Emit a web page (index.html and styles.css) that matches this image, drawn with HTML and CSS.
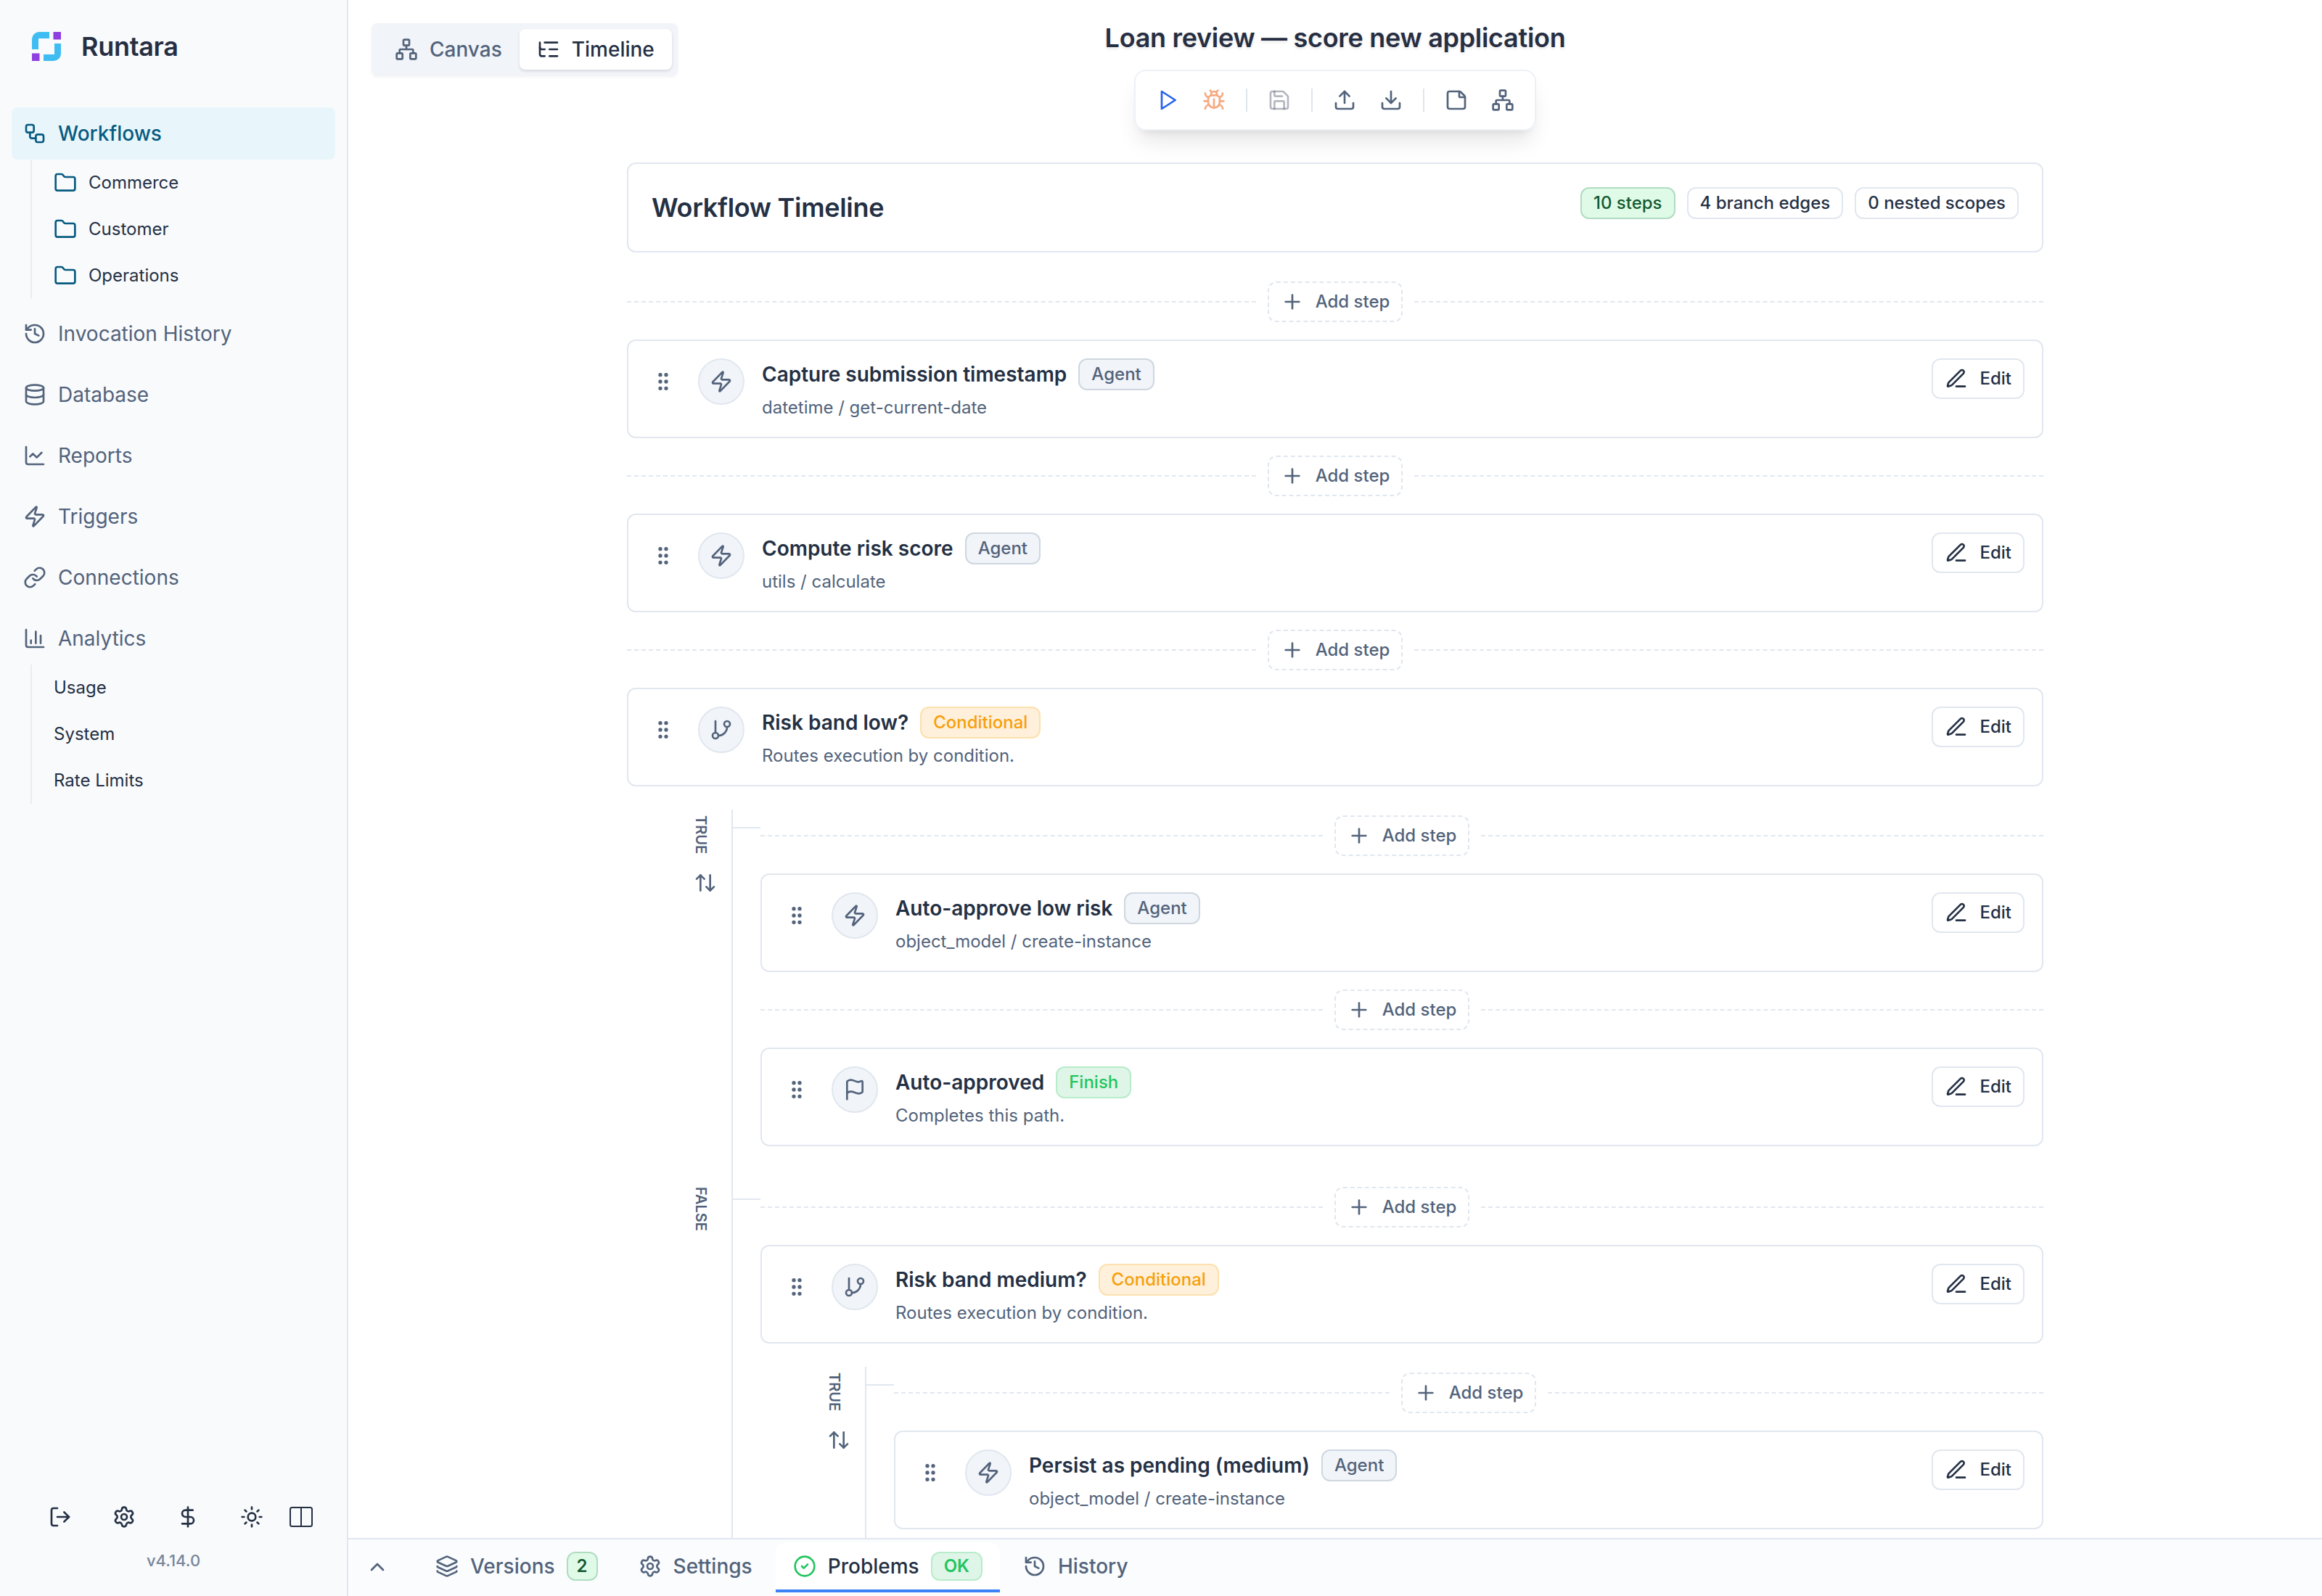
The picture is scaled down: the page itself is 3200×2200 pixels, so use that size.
FILE: index.html
```html
<!DOCTYPE html>
<html lang="en">
<head>
<meta charset="utf-8">
<title>Runtara</title>
<link rel="stylesheet" href="styles.css">
</head>
<body>
<svg class="sprite" aria-hidden="true">
  <symbol id="workflow" viewBox="0 0 24 24"><rect width="8" height="8" x="3" y="3" rx="2"/><path d="M7 11v4a2 2 0 0 0 2 2h4"/><rect width="8" height="8" x="13" y="13" rx="2"/></symbol>
  <symbol id="folder" viewBox="0 0 24 24"><path d="M20 20a2 2 0 0 0 2-2V8a2 2 0 0 0-2-2h-7.9a2 2 0 0 1-1.69-.9L9.6 3.9A2 2 0 0 0 7.93 3H4a2 2 0 0 0-2 2v13a2 2 0 0 0 2 2Z"/></symbol>
  <symbol id="history" viewBox="0 0 24 24"><path d="M3 12a9 9 0 1 0 9-9 9.75 9.75 0 0 0-6.74 2.74L3 8"/><path d="M3 3v5h5"/><path d="M12 7v5l4 2"/></symbol>
  <symbol id="database" viewBox="0 0 24 24"><ellipse cx="12" cy="5" rx="9" ry="3"/><path d="M3 5V19A9 3 0 0 0 21 19V5"/><path d="M3 12A9 3 0 0 0 21 12"/></symbol>
  <symbol id="chart-line" viewBox="0 0 24 24"><path d="M3 3v16a2 2 0 0 0 2 2h16"/><path d="m19 9-5 5-4-4-3 3"/></symbol>
  <symbol id="zap" viewBox="0 0 24 24"><path d="M4 14a1 1 0 0 1-.78-1.63l9.9-10.2a.5.5 0 0 1 .86.46l-1.92 6.02A1 1 0 0 0 13 10h7a1 1 0 0 1 .78 1.63l-9.9 10.2a.5.5 0 0 1-.86-.46l1.92-6.02A1 1 0 0 0 11 14z"/></symbol>
  <symbol id="link" viewBox="0 0 24 24"><path d="M10 13a5 5 0 0 0 7.54.54l3-3a5 5 0 0 0-7.07-7.07l-1.72 1.71"/><path d="M14 11a5 5 0 0 0-7.54-.54l-3 3a5 5 0 0 0 7.07 7.07l1.71-1.71"/></symbol>
  <symbol id="chart-column" viewBox="0 0 24 24"><path d="M3 3v16a2 2 0 0 0 2 2h16"/><path d="M18 17V9"/><path d="M13 17V5"/><path d="M8 17v-3"/></symbol>
  <symbol id="log-out" viewBox="0 0 24 24"><path d="m16 17 5-5-5-5"/><path d="M21 12H9"/><path d="M9 21H5a2 2 0 0 1-2-2V5a2 2 0 0 1 2-2h4"/></symbol>
  <symbol id="settings" viewBox="0 0 24 24"><path d="M9.671 4.136a2.34 2.34 0 0 1 4.659 0 2.34 2.34 0 0 0 3.319 1.915 2.34 2.34 0 0 1 2.33 4.033 2.34 2.34 0 0 0 0 3.831 2.34 2.34 0 0 1-2.33 4.033 2.34 2.34 0 0 0-3.319 1.915 2.34 2.34 0 0 1-4.659 0 2.34 2.34 0 0 0-3.32-1.915 2.34 2.34 0 0 1-2.33-4.033 2.34 2.34 0 0 0 0-3.831A2.34 2.34 0 0 1 6.35 6.051a2.34 2.34 0 0 0 3.319-1.915"/><circle cx="12" cy="12" r="3"/></symbol>
  <symbol id="dollar" viewBox="0 0 24 24"><path d="M12 2v20"/><path d="M17 5H9.500a3.500 3.500 0 0 0 0 7h5a3.500 3.500 0 0 1 0 7H6"/></symbol>
  <symbol id="sun" viewBox="0 0 24 24"><circle cx="12" cy="12" r="4"/><path d="M12 2v2"/><path d="M12 20v2"/><path d="m4.930 4.930 1.410 1.410"/><path d="m17.660 17.660 1.410 1.410"/><path d="M2 12h2"/><path d="M20 12h2"/><path d="m6.340 17.660-1.410 1.410"/><path d="m19.070 4.930-1.410 1.410"/></symbol>
  <symbol id="network" viewBox="0 0 24 24"><rect x="16" y="16" width="6" height="6" rx="1"/><rect x="2" y="16" width="6" height="6" rx="1"/><rect x="9" y="2" width="6" height="6" rx="1"/><path d="M5 16v-3a1 1 0 0 1 1-1h12a1 1 0 0 1 1 1v3"/><path d="M12 12V8"/></symbol>
  <symbol id="list-tree" viewBox="0 0 24 24"><path d="M8 5h13"/><path d="M13 12h8"/><path d="M13 19h8"/><path d="M3 10a2 2 0 0 0 2 2h3"/><path d="M3 5v12a2 2 0 0 0 2 2h3"/></symbol>
  <symbol id="play" viewBox="0 0 24 24"><path d="M6 3 20 12 6 21Z"/></symbol>
  <symbol id="bug" viewBox="0 0 24 24"><path d="m8 2 1.880 1.880"/><path d="M14.120 3.880 16 2"/><path d="M9 7.130v-1a3.003 3.003 0 1 1 6 0v1"/><path d="M12 20c-3.300 0-6-2.700-6-6v-3a4 4 0 0 1 4-4h4a4 4 0 0 1 4 4v3c0 3.300-2.700 6-6 6"/><path d="M12 20v-9"/><path d="M6.530 9C4.600 8.800 3 7.100 3 5"/><path d="M6 13H2"/><path d="M3 21c0-2.100 1.700-3.900 3.800-4"/><path d="M20.970 5c0 2.100-1.600 3.800-3.500 4"/><path d="M22 13h-4"/><path d="M17.200 17c2.100.1 3.800 1.900 3.800 4"/></symbol>
  <symbol id="save" viewBox="0 0 24 24"><path d="M15.200 3a2 2 0 0 1 1.400.6l3.800 3.800a2 2 0 0 1 .6 1.400V19a2 2 0 0 1-2 2H5a2 2 0 0 1-2-2V5a2 2 0 0 1 2-2z"/><path d="M17 21v-7a1 1 0 0 0-1-1H8a1 1 0 0 0-1 1v7"/><path d="M7 3v4a1 1 0 0 0 1 1h7"/></symbol>
  <symbol id="upload" viewBox="0 0 24 24"><path d="M12 3v12"/><path d="m17 8-5-5-5 5"/><path d="M21 15v4a2 2 0 0 1-2 2H5a2 2 0 0 1-2-2v-4"/></symbol>
  <symbol id="download" viewBox="0 0 24 24"><path d="M12 15V3"/><path d="M21 15v4a2 2 0 0 1-2 2H5a2 2 0 0 1-2-2v-4"/><path d="m7 10 5 5 5-5"/></symbol>
  <symbol id="note" viewBox="0 0 24 24"><path d="M21 9a2.400 2.400 0 0 0-.706-1.706l-3.588-3.588A2.400 2.400 0 0 0 15 3H5a2 2 0 0 0-2 2v14a2 2 0 0 0 2 2h14a2 2 0 0 0 2-2z"/><path d="M15 3v5a1 1 0 0 0 1 1h5"/></symbol>
  <symbol id="plus" viewBox="0 0 24 24"><path d="M5 12h14"/><path d="M12 5v14"/></symbol>
  <symbol id="pen" viewBox="0 0 24 24"><path d="M12 20h9"/><path d="M16.376 3.622a1 1 0 0 1 3.002 3.002L7.368 18.635a2 2 0 0 1-.855.506l-2.872.838a.5.5 0 0 1-.62-.62l.838-2.872a2 2 0 0 1 .506-.854z"/></symbol>
  <symbol id="grip" viewBox="0 0 24 24"><circle cx="9" cy="12" r="1"/><circle cx="9" cy="5" r="1"/><circle cx="9" cy="19" r="1"/><circle cx="15" cy="12" r="1"/><circle cx="15" cy="5" r="1"/><circle cx="15" cy="19" r="1"/></symbol>
  <symbol id="branch" viewBox="0 0 24 24"><path d="M6 3v12"/><circle cx="18" cy="6" r="3"/><circle cx="6" cy="18" r="3"/><path d="M18 9a9 9 0 0 1-9 9"/></symbol>
  <symbol id="flag" viewBox="0 0 24 24"><path d="M4 22V4a1 1 0 0 1 .4-.8A6 6 0 0 1 8 2c3 0 5 2 7.333 2q2 0 3.067-.8A1 1 0 0 1 20 4v10a1 1 0 0 1-.4.8A6 6 0 0 1 16 16c-3 0-5-2-8-2a6 6 0 0 0-4 1.528"/></symbol>
  <symbol id="swap" viewBox="0 0 24 24"><path d="m21 16-4 4-4-4"/><path d="M17 20V4"/><path d="m3 8 4-4 4 4"/><path d="M7 4v16"/></symbol>
  <symbol id="chevron-up" viewBox="0 0 24 24"><path d="m18 15-6-6-6 6"/></symbol>
  <symbol id="layers" viewBox="0 0 24 24"><path d="M12.830 2.180a2 2 0 0 0-1.660 0L2.600 6.080a1 1 0 0 0 0 1.830l8.580 3.910a2 2 0 0 0 1.660 0l8.580-3.900a1 1 0 0 0 0-1.830z"/><path d="M2 12a1 1 0 0 0 .58.91l8.600 3.910a2 2 0 0 0 1.650 0l8.580-3.900A1 1 0 0 0 22 12"/><path d="M2 17a1 1 0 0 0 .58.91l8.600 3.910a2 2 0 0 0 1.650 0l8.580-3.900A1 1 0 0 0 22 17"/></symbol>
  <symbol id="check" viewBox="0 0 24 24"><circle cx="12" cy="12" r="10"/><path d="m9 12 2 2 4-4"/></symbol>
</svg>

<div class="app">
  <aside class="sidebar">
    <div class="brand">
      <svg class="logo" viewBox="0 0 40 40"><path class="logo-blue" d="M10 0H24V9H9V24H0V10A10 10 0 0 1 10 0ZM40 16V30A10 10 0 0 1 30 40H16V31H31V16Z"/><path class="logo-purple" d="M29.500 0H40V10.500H29.500ZM0 29.500H10.500V40H0Z"/></svg>
      <span>Runtara</span>
    </div>
    <nav class="nav">
      <div class="group">
        <a class="item active"><svg class="icon"><use href="#workflow"/></svg>Workflows</a>
        <div class="sub">
          <a class="subitem"><svg class="icon folder"><use href="#folder"/></svg>Commerce</a>
          <a class="subitem"><svg class="icon folder"><use href="#folder"/></svg>Customer</a>
          <a class="subitem"><svg class="icon folder"><use href="#folder"/></svg>Operations</a>
        </div>
      </div>
      <a class="item"><svg class="icon"><use href="#history"/></svg>Invocation History</a>
      <a class="item"><svg class="icon"><use href="#database"/></svg>Database</a>
      <a class="item"><svg class="icon"><use href="#chart-line"/></svg>Reports</a>
      <a class="item"><svg class="icon"><use href="#zap"/></svg>Triggers</a>
      <a class="item"><svg class="icon"><use href="#link"/></svg>Connections</a>
      <div class="group">
        <a class="item"><svg class="icon"><use href="#chart-column"/></svg>Analytics</a>
        <div class="sub">
          <a class="subitem">Usage</a>
          <a class="subitem">System</a>
          <a class="subitem">Rate Limits</a>
        </div>
      </div>
    </nav>
    <div class="side-foot">
      <div class="side-icons">
        <span class="side-btn"><svg class="icon"><use href="#log-out"/></svg></span>
        <span class="side-btn"><svg class="icon"><use href="#settings"/></svg></span>
        <span class="side-btn"><svg class="icon"><use href="#dollar"/></svg></span>
        <span class="side-btn"><svg class="icon"><use href="#sun"/></svg></span>
        <svg class="panel" viewBox="0 0 32 28"><rect x="1" y="1" width="30" height="26" rx="2.500"/><path d="M16 1v26"/></svg>
      </div>
      <div class="version">v4.14.0</div>
    </div>
  </aside>

  <main class="main">
    <header class="top">
      <div class="views">
        <span class="view"><svg class="icon"><use href="#network"/></svg>Canvas</span>
        <span class="view on"><svg class="icon"><use href="#list-tree"/></svg>Timeline</span>
      </div>
      <div class="heading">
        <h1>Loan review — score new application</h1>
        <div class="toolbar">
          <span class="tool run"><svg class="icon"><use href="#play"/></svg></span>
          <span class="tool debug"><svg class="icon"><use href="#bug"/></svg></span>
          <i class="sep"></i>
          <span class="tool off"><svg class="icon"><use href="#save"/></svg></span>
          <i class="sep"></i>
          <span class="tool"><svg class="icon"><use href="#upload"/></svg></span>
          <span class="tool"><svg class="icon"><use href="#download"/></svg></span>
          <i class="sep"></i>
          <span class="tool"><svg class="icon"><use href="#note"/></svg></span>
          <span class="tool"><svg class="icon"><use href="#network"/></svg></span>
        </div>
      </div>
    </header>

    <div class="scroll">
      <section class="timeline">
        <div class="card summary">
          <h2>Workflow Timeline</h2>
          <div class="badges">
            <span class="badge steps">10 steps</span>
            <span class="badge">4 branch edges</span>
            <span class="badge">0 nested scopes</span>
          </div>
        </div>

        <div class="flow">
          <div class="add"><span class="add-btn"><svg class="icon"><use href="#plus"/></svg>Add step</span></div>
          <div class="card step">
            <span class="grip"><svg class="icon"><use href="#grip"/></svg></span>
            <span class="kind"><svg class="icon"><use href="#zap"/></svg></span>
            <div class="info"><div class="name">Capture submission timestamp<span class="badge agent">Agent</span></div><div class="desc">datetime / get-current-date</div></div>
            <span class="edit"><svg class="icon"><use href="#pen"/></svg>Edit</span>
          </div>
          <div class="add"><span class="add-btn"><svg class="icon"><use href="#plus"/></svg>Add step</span></div>
          <div class="card step">
            <span class="grip"><svg class="icon"><use href="#grip"/></svg></span>
            <span class="kind"><svg class="icon"><use href="#zap"/></svg></span>
            <div class="info"><div class="name">Compute risk score<span class="badge agent">Agent</span></div><div class="desc">utils / calculate</div></div>
            <span class="edit"><svg class="icon"><use href="#pen"/></svg>Edit</span>
          </div>
          <div class="add"><span class="add-btn"><svg class="icon"><use href="#plus"/></svg>Add step</span></div>
          <div class="card step">
            <span class="grip"><svg class="icon"><use href="#grip"/></svg></span>
            <span class="kind"><svg class="icon"><use href="#branch"/></svg></span>
            <div class="info"><div class="name">Risk band low?<span class="badge conditional">Conditional</span></div><div class="desc">Routes execution by condition.</div></div>
            <span class="edit"><svg class="icon"><use href="#pen"/></svg>Edit</span>
          </div>
        </div>

        <div class="branches">
          <div class="branch">
            <div class="rail"><span class="label">TRUE</span><svg class="icon"><use href="#swap"/></svg></div>
            <div class="tick"></div>
            <div class="flow">
              <div class="add"><span class="add-btn"><svg class="icon"><use href="#plus"/></svg>Add step</span></div>
              <div class="card step">
                <span class="grip"><svg class="icon"><use href="#grip"/></svg></span>
                <span class="kind"><svg class="icon"><use href="#zap"/></svg></span>
                <div class="info"><div class="name">Auto-approve low risk<span class="badge agent">Agent</span></div><div class="desc">object_model / create-instance</div></div>
                <span class="edit"><svg class="icon"><use href="#pen"/></svg>Edit</span>
              </div>
              <div class="add"><span class="add-btn"><svg class="icon"><use href="#plus"/></svg>Add step</span></div>
              <div class="card step">
                <span class="grip"><svg class="icon"><use href="#grip"/></svg></span>
                <span class="kind"><svg class="icon"><use href="#flag"/></svg></span>
                <div class="info"><div class="name">Auto-approved<span class="badge ok">Finish</span></div><div class="desc">Completes this path.</div></div>
                <span class="edit"><svg class="icon"><use href="#pen"/></svg>Edit</span>
              </div>
            </div>
          </div>
          <div class="branch">
            <div class="rail"><span class="label">FALSE</span></div>
            <div class="tick"></div>
            <div class="nested">
              <div class="flow">
                <div class="add"><span class="add-btn"><svg class="icon"><use href="#plus"/></svg>Add step</span></div>
                <div class="card step">
                  <span class="grip"><svg class="icon"><use href="#grip"/></svg></span>
                  <span class="kind"><svg class="icon"><use href="#branch"/></svg></span>
                  <div class="info"><div class="name">Risk band medium?<span class="badge conditional">Conditional</span></div><div class="desc">Routes execution by condition.</div></div>
                  <span class="edit"><svg class="icon"><use href="#pen"/></svg>Edit</span>
                </div>
              </div>
              <div class="branches">
                <div class="branch">
                  <div class="rail"><span class="label">TRUE</span><svg class="icon"><use href="#swap"/></svg></div>
                  <div class="tick"></div>
                  <div class="flow">
                    <div class="add"><span class="add-btn"><svg class="icon"><use href="#plus"/></svg>Add step</span></div>
                    <div class="card step">
                      <span class="grip"><svg class="icon"><use href="#grip"/></svg></span>
                      <span class="kind"><svg class="icon"><use href="#zap"/></svg></span>
                      <div class="info"><div class="name">Persist as pending (medium)<span class="badge agent">Agent</span></div><div class="desc">object_model / create-instance</div></div>
                      <span class="edit"><svg class="icon"><use href="#pen"/></svg>Edit</span>
                    </div>
                  </div>
                </div>
              </div>
            </div>
          </div>
        </div>
      </section>
    </div>

    <footer class="dock">
      <span class="collapse"><svg class="icon"><use href="#chevron-up"/></svg></span>
      <span class="tab"><svg class="icon"><use href="#layers"/></svg>Versions<span class="badge steps count">2</span></span>
      <span class="tab"><svg class="icon"><use href="#settings"/></svg>Settings</span>
      <span class="tab current"><svg class="icon"><use href="#check"/></svg>Problems<span class="badge ok">OK</span></span>
      <span class="tab"><svg class="icon"><use href="#history"/></svg>History</span>
    </footer>
  </main>
</div>
</body>
</html>
```
FILE: styles.css
```css
:root {
  --ink: #243044;
  --muted: #52637b;
  --line: #e1e7ef;
  --accent: #075b80;
}

* { box-sizing: border-box; }

body {
  margin: 0;
  font-family: Inter, sans-serif;
  font-size: 28px;
  color: var(--ink);
  background: #fff;
  overflow: hidden;
}

.sprite { display: none; }

.icon {
  width: 32px;
  height: 32px;
  flex: none;
  fill: none;
  stroke: currentColor;
  stroke-width: 2;
  stroke-linecap: round;
  stroke-linejoin: round;
}

.app { display: flex; width: 3200px; height: 2200px; }

/* Sidebar */
.sidebar {
  width: 480px;
  flex: none;
  display: flex;
  flex-direction: column;
  background: #f9fafc;
  border-right: 2px solid var(--line);
}

.brand {
  display: flex;
  align-items: center;
  gap: 28px;
  height: 128px;
  padding-left: 44px;
  font-size: 36px;
  font-weight: 600;
  letter-spacing: -.3px;
  color: #272e42;
}

.logo { width: 40px; height: 40px; }
.logo-blue { fill: #3fbdf2; }
.logo-purple { fill: #8e3fe0; }

.nav {
  display: flex;
  flex-direction: column;
  gap: 12px;
  padding: 20px 16px;
}

.item {
  display: flex;
  align-items: center;
  gap: 16px;
  height: 72px;
  padding: 0 16px;
  border-radius: 8px;
  color: var(--muted);
}

.item.active {
  background: #e8f6fc;
  color: var(--accent);
  font-weight: 500;
}

.sub {
  margin-left: 26px;
  border-left: 2px solid #e9edf2;
}

.subitem {
  display: flex;
  align-items: center;
  gap: 16px;
  height: 64px;
  padding-left: 30px;
  font-size: 24px;
  line-height: 32px;
}

.folder { color: var(--accent); }

.side-foot { margin-top: auto; padding-bottom: 33px; }

.side-icons {
  display: flex;
  align-items: center;
  padding-left: 39px;
}

.side-btn { width: 88px; display: flex; justify-content: center; }

.panel {
  width: 32px;
  height: 28px;
  margin-left: 8px;
  fill: none;
  stroke: currentColor;
  stroke-width: 2;
}

.version {
  margin-top: 28px;
  text-align: center;
  font-size: 22px;
  line-height: 32px;
  font-weight: 500;
  color: #78869b;
}

/* Header */
.main {
  flex: 1;
  min-width: 0;
  display: flex;
  flex-direction: column;
}

.top {
  display: grid;
  grid-template-columns: 1fr auto 1fr;
  align-items: start;
  height: 224px;
  flex: none;
  padding: 24px 32px 0;
}

.views {
  justify-self: start;
  display: flex;
  height: 72px;
  margin-top: 8px;
  padding: 8px;
  border-radius: 8px;
  background: #f1f4f9;
  box-shadow: 0 2px 4px rgba(0, 0, 0, .06);
}

.view {
  display: flex;
  align-items: center;
  gap: 16px;
  padding: 0 24px;
  border-radius: 8px;
  font-weight: 500;
  color: var(--muted);
}

.view.on {
  background: #fff;
  color: var(--ink);
  box-shadow: 0 2px 4px rgba(0, 0, 0, .12);
}

.heading {
  display: flex;
  flex-direction: column;
  align-items: center;
  gap: 16px;
}

h1 {
  margin: 0;
  font-size: 36px;
  line-height: 56px;
  font-weight: 600;
  letter-spacing: -.3px;
  color: #272e42;
  text-shadow: 0 2px 4px rgba(0, 0, 0, .1);
}

.toolbar {
  display: flex;
  align-items: center;
  gap: 8px;
  height: 84px;
  padding: 0 16px;
  border: 2px solid #edf1f6;
  border-radius: 16px;
  box-shadow: 0 20px 30px -6px rgba(0, 0, 0, .1), 0 8px 12px -8px rgba(0, 0, 0, .1);
}

.tool {
  display: flex;
  align-items: center;
  justify-content: center;
  width: 56px;
  height: 56px;
  color: var(--muted);
}

.run { color: #2563eb; }
.debug { color: #f6a981; }
.off { color: rgba(75, 85, 105, .42); }

.sep {
  width: 2px;
  height: 32px;
  margin: 0 8px;
  background: #dfe5ee;
}

/* Timeline */
.scroll { flex: 1; min-height: 0; overflow: hidden; }

.timeline { width: 1952px; margin: 0 auto; }

.card {
  border: 2px solid var(--line);
  border-radius: 12px;
  background: #fff;
}

.summary {
  display: flex;
  justify-content: space-between;
  align-items: flex-start;
  height: 124px;
  margin-bottom: 40px;
  padding: 32px;
}

h2 {
  margin: 0;
  font-size: 36px;
  line-height: 56px;
  font-weight: 600;
  letter-spacing: -.3px;
}

.badges { display: flex; gap: 16px; }

.badge {
  display: inline-flex;
  align-items: center;
  height: 44px;
  padding: 0 16px;
  border: 2px solid var(--line);
  border-radius: 12px;
  font-size: 24px;
  line-height: 32px;
  font-weight: 500;
}

.badge.steps { background: #dffbe8; border-color: #b0dcc0; color: #14592f; }
.badge.agent { background: #f1f4f9; border-color: #ced7e0; color: var(--muted); }
.badge.conditional { background: #fef0da; border-color: #fde0ad; color: #f79f0c; }
.badge.ok { background: #def5e7; border-color: #b8ecca; color: #22c55e; }

.flow { display: flex; flex-direction: column; gap: 24px; }

.add { display: flex; align-items: center; gap: 16px; }

.add::before,
.add::after {
  content: "";
  flex: 1;
  border-top: 2px dashed var(--line);
}

.add-btn,
.edit {
  display: flex;
  align-items: center;
  gap: 16px;
  height: 56px;
  padding: 0 16px;
  border: 2px solid var(--line);
  border-radius: 12px;
  font-size: 24px;
  line-height: 32px;
  font-weight: 500;
}

.add-btn { border-style: dashed; color: var(--muted); }

.step {
  display: flex;
  align-items: flex-start;
  gap: 24px;
  height: 136px;
  padding: 24px;
}

.grip,
.kind {
  display: flex;
  align-items: center;
  justify-content: center;
  width: 48px;
  height: 64px;
  color: var(--muted);
}

.kind {
  width: 64px;
  border: 2px solid var(--line);
  border-radius: 50%;
  background: #f1f4f9;
}

.info { flex: 1; }

.name {
  display: flex;
  align-items: center;
  gap: 16px;
  height: 44px;
  font-weight: 600;
}

.desc {
  margin-top: 8px;
  font-size: 24px;
  line-height: 32px;
  color: var(--muted);
}

.branches { margin-top: 32px; }

.branch {
  display: grid;
  grid-template-columns: 144px 40px 1fr;
  padding-bottom: 48px;
}

.branch > :last-child { padding-top: 8px; }

.rail {
  display: flex;
  flex-direction: column;
  align-items: flex-start;
  gap: 24px;
  padding: 8px 0 0 92px;
  color: var(--muted);
}

.label {
  writing-mode: vertical-rl;
  font-size: 20px;
  line-height: 20px;
  font-weight: 600;
}

.tick {
  border-left: 2px solid var(--line);
  margin-bottom: -48px;
}

.tick::before {
  content: "";
  display: block;
  height: 2px;
  margin-top: 24px;
  background: var(--line);
}

/* Bottom dock */
.dock {
  display: flex;
  align-items: flex-start;
  gap: 8px;
  height: 80px;
  flex: none;
  border-top: 2px solid var(--line);
  background: #fafcfe;
}

.collapse {
  display: flex;
  align-items: center;
  height: 76px;
  margin-right: 32px;
  padding-left: 24px;
  color: var(--muted);
}

.tab {
  display: flex;
  align-items: center;
  gap: 16px;
  height: 68px;
  margin-top: 5px;
  padding: 0 24px;
  border-bottom: 4px solid transparent;
  font-weight: 500;
  color: var(--muted);
}

.tab .badge { height: 40px; font-weight: 600; }
.tab .count { padding: 0 12px; }

.tab.current {
  background: #fff;
  border-color: #3b82f6;
  border-radius: 12px 12px 0 0;
  color: var(--ink);
}

.tab.current .icon { color: #22c55e; }
```
